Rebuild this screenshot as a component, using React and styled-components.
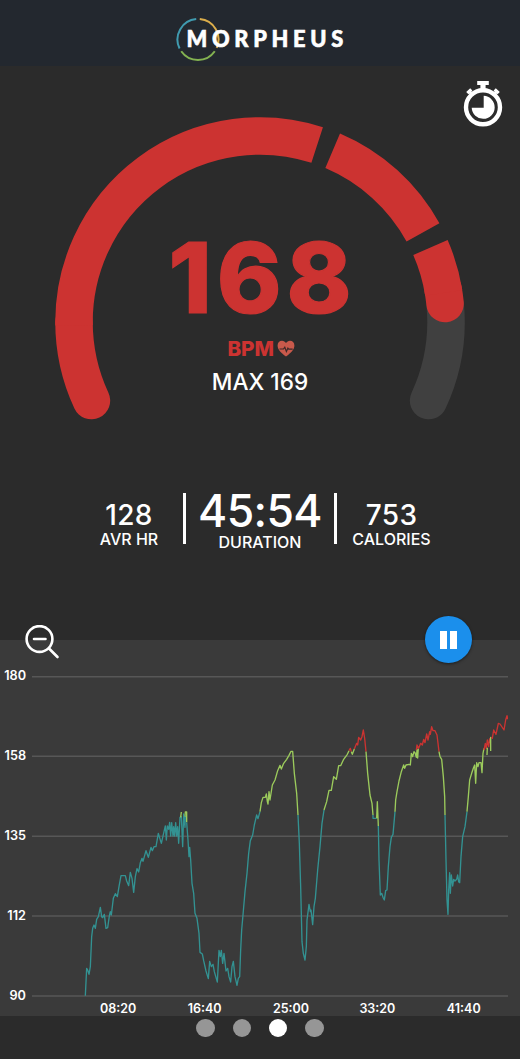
import React from "react";
import styled, { createGlobalStyle } from "styled-components";

const colors = {
  page: "#2b2b2b",
  header: "#23282f",
  panel: "#3a3a3a",
  track: "#404040",
  grid: "#575757",
  red: "#cc3331",
  green: "#9ccb5c",
  teal: "#339292",
  blue: "#1b8fec",
};

const CENTER = { x: 205, y: 205 };
const RADIUS = 186;

// angles are clockwise degrees from 12 o'clock
const arc = (from, to, r = RADIUS, c = CENTER) => {
  const point = (deg) => {
    const rad = (deg * Math.PI) / 180;
    return `${(c.x + r * Math.sin(rad)).toFixed(2)} ${(
      c.y -
      r * Math.cos(rad)
    ).toFixed(2)}`;
  };
  const large = to - from > 180 ? 1 : 0;
  return `M${point(from)}A${r} ${r} 0 ${large} 1 ${point(to)}`;
};

const stats = [
  { value: "128", label: "AVR HR" },
  { value: "45:54", label: "DURATION", main: true },
  { value: "753", label: "CALORIES" },
];

const bpmTicks = [180, 158, 135, 112, 90];
const timeTicks = ["08:20", "16:40", "25:00", "33:20", "41:40"];
const gridLines = [26, 265, 505, 744, 984];

// the session split in three parts, every part with its own origin
const session = [
  {
    origin: [114, 366],
    lines: [
      {
        zone: "teal",
        points:
          "46,617 50,535 53,540 57,553 61,530 65,440 68,415 72,405 76,415 80,388 85,380 91,352 95,380 98,383 103,373 108,415 113,413 118,378 121,365 124,375 130,325 136,311 142,320 147,290 153,257 166,257 170,273 176,287 181,247 186,265 191,307 196,260 201,236 206,246 211,218 216,205 219,214 228,182 235,202 243,172 247,182 252,170 258,170 265,130 274,160 282,125 286,108 289,150 292,108 296,118 299,97 302,138 305,98 309,138 311,110 314,138 317,98 320,138 323,110 326,160 330,82 334,80 338,170 341,72 345,112 346,78",
      },
      { zone: "green", points: "332,82 334,66" },
      { zone: "green", points: "345,80 346,66 350,66 350,97" },
      {
        zone: "teal",
        points:
          "350,97 354,150 357,200 359,172 362,210 366,280 371,310 375,370 381,385 387,430 390,487 397,492 401,512 408,543 415,566 419,514 424,530 429,523 433,545 442,576 447,481 451,500 454,481 458,520 462,490 468,543 473,535 477,560 482,576 486,530 490,514 495,560 501,586 505,565 509,560 512,480 515,420 519,375 525,305 531,250 536,190 541,152 548,135 553,105 560,75 564,86 570,65",
      },
    ],
  },
  {
    origin: [624, 156],
    lines: [
      {
        zone: "green",
        points:
          "60,275 64,248 69,232 76,232 79,222 82,245 84,252 87,215 90,240 97,195 105,180 113,152 120,136 124,147 131,130 140,118 147,106 153,94 158,94 163,160 170,220 174,285",
      },
      {
        zone: "teal",
        points:
          "174,285 178,370 182,500 186,665 190,700 195,720 199,680 201,600 207,553 211,575 213,570 218,614 222,560 226,535 233,450 240,380 246,310 252,270",
      },
      {
        zone: "green",
        points:
          "252,270 260,245 267,211 274,211 281,170 289,178 296,137 302,137 311,118 322,103 327,92",
      },
      { zone: "red", points: "327,92 331,85 334,95" },
      { zone: "green", points: "334,95 337,103 343,87" },
      {
        zone: "red",
        points: "343,87 350,70 353,75 356,52 362,60 366,50 370,30 374,55 378,95",
      },
      { zone: "green", points: "378,95 383,160 390,225 396,250 399,285" },
      { zone: "teal", points: "399,285 399,295 410,295" },
      { zone: "green", points: "410,295 412,245 415,318" },
      {
        zone: "teal",
        points:
          "415,318 417,420 421,525 425,520 429,532 433,540 437,512 441,510 445,440 450,380 454,352 459,343 465,275",
      },
    ],
  },
  {
    origin: [1044, -204],
    lines: [
      {
        zone: "green",
        points:
          "45,635 47,600 51,575 57,543 64,515 71,495 74,505 78,495 87,493 91,495 94,460 98,470 102,455 105,458 109,472 111,450 113,474 115,445",
      },
      {
        zone: "red",
        points:
          "109,450 111,435 116,445 122,430 127,435 131,418 135,428 140,402 144,420 149,395 151,403 155,380 159,392 165,392 171,405 177,455",
      },
      { zone: "green", points: "177,455 180,470 185,478 190,530 194,590 195,645" },
      {
        zone: "teal",
        points:
          "195,645 198,780 201,900 204,943 206,870 209,818 211,880 214,825 218,858 221,838 225,843 230,838 233,825 236,845 239,848 243,770 248,710 255,680 261,635",
      },
      {
        zone: "green",
        points:
          "261,635 265,590 269,540 275,520 280,505 284,495 287,550 290,488 294,500 297,488 303,488 306,518 309,460 312,445",
      },
      { zone: "red", points: "312,450 316,430 319,445 322,420 326,440 329,415" },
      { zone: "green", points: "321,465 322,443" },
      { zone: "green", points: "331,430 332,412 332,453" },
      {
        zone: "red",
        points:
          "334,412 337,415 341,390 348,403 355,370 360,372 372,390 377,360 381,347 384,358",
      },
    ],
  },
];

const Logo = () => (
  <Brand>
    <Ring viewBox="0 0 44 44">
      <path d={arc(-116, -5, 20.5, { x: 22, y: 22 })} stroke="#409bb0" />
      <path d={arc(5, 114, 20.5, { x: 22, y: 22 })} stroke="#dcae4b" />
      <path d={arc(125, 235, 20.5, { x: 22, y: 22 })} stroke="#83b251" />
    </Ring>
    <Wordmark>MORPHEUS</Wordmark>
  </Brand>
);

const Stopwatch = () => (
  <StopwatchIcon viewBox="0 0 40 48">
    <path d="M14.2 1h11.6v4h-3.2v6h-5.2V5h-3.2z" fill="#fff" />
    <path d="M4.3 13.2l4-3.8M35.7 13.2l-4-3.8" stroke="#fff" strokeWidth="3.2" />
    <path d="M6.5 11.5l3 3.5M33.5 11.5l-3 3.5" stroke="#fff" strokeWidth="3" />
    <circle cx="20" cy="27.3" r="17" fill="none" stroke="#fff" strokeWidth="4.4" />
    <path d="M20.7 15.8A11.5 11.5 0 1 1 8.7 27.8h12z" fill="#fff" />
  </StopwatchIcon>
);

const Heart = () => (
  <HeartIcon viewBox="0 0 18 17">
    <path
      d="M9 16.5C4 12.6.6 9.6.6 5.4.6 2.7 2.5.7 5 .7c1.7 0 3.2.9 4 2.4C9.8 1.6 11.3.7 13 .7c2.5 0 4.4 2 4.4 4.7 0 4.2-3.4 7.2-8.4 11.1z"
      fill="#c8594b"
    />
    <path
      d="M2.5 9h4l1.3-1.8 1.6 4.3 1.5-3.3.8 1h4"
      fill="none"
      stroke="#3b2928"
      strokeWidth="1.2"
    />
  </HeartIcon>
);

const Gauge = () => (
  <GaugeArea>
    <Dial viewBox="0 0 410 303">
      <path d={arc(85, 115)} stroke={colors.track} strokeLinecap="round" />
      <path d={arc(-115, -90)} stroke={colors.red} strokeLinecap="round" />
      <path d={arc(-91, 17.9)} stroke={colors.red} />
      <path d={arc(23, 61.2)} stroke={colors.red} />
      <path d={arc(80, 84.3)} stroke={colors.red} strokeLinecap="round" />
      <path d={arc(66.4, 81)} stroke={colors.red} />
    </Dial>
    <Readout>
      <HeartRate>168</HeartRate>
      <Unit>
        BPM
        <Heart />
      </Unit>
      <MaxRate>MAX 169</MaxRate>
    </Readout>
  </GaugeArea>
);

const Chart = () => (
  <ChartPanel>
    <Controls>
      <ZoomOut aria-label="Zoom out">
        <svg width="36" height="36" viewBox="0 0 36 36">
          <g fill="none" stroke="#fff" strokeWidth="2.6" strokeLinecap="round">
            <circle cx="14.5" cy="14" r="12.9" />
            <path d="M9 14h11.5M24 23.5l8.5 8.5" />
          </g>
        </svg>
      </ZoomOut>
      <Pause aria-label="Pause">
        <PauseBar />
        <PauseBar />
      </Pause>
    </Controls>
    <ChartBody>
      <BpmAxis>
        {bpmTicks.map((tick) => (
          <span key={tick}>{tick}</span>
        ))}
      </BpmAxis>
      <Plot viewBox="0 0 1428 1008">
        {gridLines.map((y) => (
          <path key={y} d={`M0 ${y}H1428`} stroke={colors.grid} strokeWidth="4.5" />
        ))}
        {session.map(({ origin, lines }) => (
          <g key={origin[0]} transform={`translate(${origin[0]} ${origin[1]})`}>
            {lines.map(({ zone, points }) => (
              <polyline
                key={points}
                points={points}
                fill="none"
                stroke={colors[zone]}
                strokeWidth="4"
                strokeLinejoin="round"
              />
            ))}
          </g>
        ))}
      </Plot>
    </ChartBody>
    <TimeAxis>
      {timeTicks.map((tick) => (
        <span key={tick}>{tick}</span>
      ))}
    </TimeAxis>
  </ChartPanel>
);

export default function App() {
  return (
    <Screen>
      <GlobalStyle />
      <Header>
        <Logo />
      </Header>
      <Main>
        <Stopwatch />
        <Gauge />
        <Stats>
          {stats.map(({ value, label, main }) => (
            <Stat key={label} $main={main}>
              <StatValue $main={main}>{value}</StatValue>
              <StatLabel>{label}</StatLabel>
            </Stat>
          ))}
        </Stats>
      </Main>
      <Chart />
      <Pager>
        {[0, 1, 2, 3].map((page) => (
          <Dot key={page} $active={page === 2} />
        ))}
      </Pager>
    </Screen>
  );
}

const GlobalStyle = createGlobalStyle`
  * {
    box-sizing: border-box;
  }
  body {
    margin: 0;
    background: ${colors.page};
    color: #fff;
    font-family: Inter, "Liberation Sans", sans-serif;
  }
`;

const Screen = styled.div`
  display: flex;
  flex-direction: column;
  width: 520px;
  height: 1059px;
  overflow: hidden;
  background: ${colors.page};
`;

const Header = styled.header`
  height: 66px;
  padding: 17px 0 0 176px;
  background: ${colors.header};
`;

const Brand = styled.div`
  display: flex;
  align-items: center;
`;

const Ring = styled.svg`
  width: 44px;
  height: 45px;
  fill: none;
  stroke-width: 2;
`;

const Wordmark = styled.span`
  margin: -1px 0 0 -33.5px;
  font-family: Lato, sans-serif;
  font-size: 21.8px;
  font-weight: 900;
  line-height: 24px;
  letter-spacing: 4.7px;
  -webkit-text-stroke: 0.6px #fff;
`;

const Main = styled.main`
  position: relative;
  height: 574px;
  padding-top: 51px;
`;

const StopwatchIcon = styled.svg`
  position: absolute;
  top: 13.5px;
  right: 17.5px;
  width: 40px;
  height: 48px;
  fill: none;
`;

const GaugeArea = styled.section`
  display: grid;
  justify-content: center;
`;

const Dial = styled.svg`
  grid-area: 1 / 1;
  width: 410px;
  height: 303px;
  fill: none;
  stroke-width: 37.5px;
`;

const Readout = styled.div`
  grid-area: 1 / 1;
  display: flex;
  flex-direction: column;
  align-items: center;
  padding-top: 121px;
`;

const HeartRate = styled.div`
  margin-right: -5px;
  color: ${colors.red};
  font-size: 98px;
  font-weight: 800;
  line-height: 80px;
  letter-spacing: 5px;
  -webkit-text-stroke: 1.2px ${colors.red};
`;

const Unit = styled.div`
  display: flex;
  align-items: center;
  margin: 18.5px -2px 0 0;
  color: ${colors.red};
  font-size: 20.7px;
  font-weight: 800;
  line-height: 24px;
`;

const HeartIcon = styled.svg`
  width: 18px;
  height: 17px;
  margin-left: 2.5px;
`;

const MaxRate = styled.div`
  margin-top: 9px;
  font-size: 22.6px;
  font-weight: 500;
  line-height: 24px;
`;

const Stats = styled.section`
  display: grid;
  grid-template-columns: 108px 154px 109px;
  height: 51px;
  margin: 72.5px 0 0 75px;
`;

const Stat = styled.div`
  display: flex;
  flex-direction: column;
  align-items: center;
  height: 51px;
  padding-top: ${({ $main }) => ($main ? 0 : "7px")};
  border: solid #fff;
  border-width: ${({ $main }) => ($main ? "0 3px" : 0)};
`;

const StatValue = styled.div`
  margin-top: ${({ $main }) => ($main ? "-4px" : 0)};
  font-size: ${({ $main }) => ($main ? "44.5px" : "28px")};
  font-weight: 500;
  line-height: ${({ $main }) => ($main ? "44px" : "30px")};
  letter-spacing: ${({ $main }) => ($main ? "-0.6px" : "0.3px")};
`;

const StatLabel = styled.div`
  font-size: 16px;
  font-weight: 500;
  line-height: 18px;
`;

const ChartPanel = styled.section`
  height: 375.5px;
  background: ${colors.panel};
`;

const Controls = styled.div`
  display: flex;
  justify-content: space-between;
  height: 52px;
  margin-top: -24px;
  padding: 0 48px 0 25px;
`;

const ZoomOut = styled.button`
  height: 36px;
  margin-top: 8.5px;
  padding: 0;
  border: 0;
  background: none;
`;

const Pause = styled.button`
  display: flex;
  align-items: center;
  justify-content: center;
  gap: 2.5px;
  width: 47px;
  height: 47px;
  padding: 0;
  border: 0;
  border-radius: 50%;
  background: ${colors.blue};
  box-shadow: 0 1px 3px rgba(0, 0, 0, 0.5);
`;

const PauseBar = styled.span`
  width: 7px;
  height: 18px;
  background: #fff;
`;

const ChartBody = styled.div`
  display: flex;
`;

const BpmAxis = styled.div`
  display: flex;
  flex-direction: column;
  justify-content: space-between;
  width: 32px;
  height: 336px;
  padding-right: 6px;
  text-align: right;
  font-size: 12.7px;
  font-weight: 600;
  line-height: 16px;
`;

const Plot = styled.svg`
  width: 476px;
  height: 336px;
`;

const TimeAxis = styled.div`
  display: grid;
  grid-template-columns: repeat(5, 86.4px);
  margin-left: 75px;
  text-align: center;
  font-size: 12.5px;
  font-weight: 600;
  line-height: 9px;
`;

const Pager = styled.nav`
  display: flex;
  gap: 18px;
  padding: 3.5px 0 0 196.3px;
`;

const Dot = styled.span`
  width: 18.4px;
  height: 18.4px;
  border-radius: 50%;
  background: ${({ $active }) => ($active ? "#fff" : "#969696")};
`;
